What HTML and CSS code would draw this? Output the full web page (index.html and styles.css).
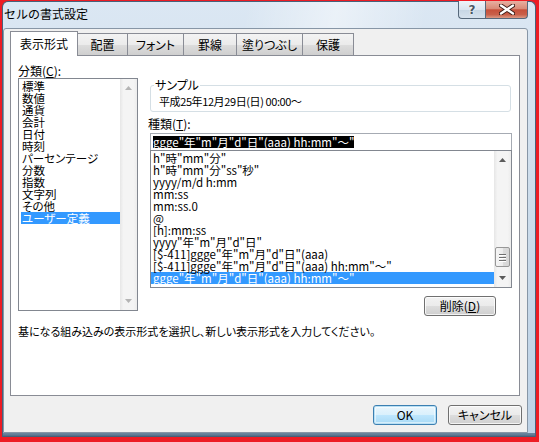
FILE: index.html
```html
<!DOCTYPE html>
<html lang="ja">
<head>
<meta charset="utf-8">
<title>セルの書式設定</title>
<link rel="stylesheet" href="styles.css">
</head>
<body>
<div class="frame">
  <div class="titlebar">
    <span class="title">セルの書式設定</span>
    <div class="caption-btns">
      <span class="cb help">?</span>
      <span class="cb close">
        <svg width="16" height="11" viewBox="0 0 16 11"><path d="M2 1.5 L14 9.5 M14 1.5 L2 9.5" stroke="#3a1a14" stroke-width="4.2" stroke-linecap="round"/><path d="M2 1.5 L14 9.5 M14 1.5 L2 9.5" stroke="#fff" stroke-width="2.4" stroke-linecap="round"/></svg>
      </span>
    </div>
  </div>
  <div class="client">
    <div class="tabs">
      <div class="tab active">表示形式</div>
      <div class="tab">配置</div>
      <div class="tab">フォント</div>
      <div class="tab">罫線</div>
      <div class="tab">塗りつぶし</div>
      <div class="tab">保護</div>
    </div>
    <div class="panel">
      <div class="cols">
        <div class="left">
          <div class="lbl">分類(<u>C</u>):</div>
          <div class="listbox cat">
            <ul class="items">
              <li>標準</li>
              <li>数値</li>
              <li>通貨</li>
              <li>会計</li>
              <li>日付</li>
              <li>時刻</li>
              <li>パーセンテージ</li>
              <li>分数</li>
              <li>指数</li>
              <li>文字列</li>
              <li>その他</li>
              <li class="sel">ユーザー定義</li>
            </ul>
            <div class="vscroll off">
              <svg class="arr" width="7" height="4" viewBox="0 0 7 4"><path d="M0 4 L3.5 0 L7 4Z" fill="#b4b4b4"/></svg>
              <svg class="arr" width="7" height="4" viewBox="0 0 7 4"><path d="M0 0 L3.5 4 L7 0Z" fill="#b4b4b4"/></svg>
            </div>
          </div>
        </div>
        <div class="right">
          <fieldset class="sample">
            <legend>サンプル</legend>
            <div class="sample-val">平成25年12月29日(日) 00:00～</div>
          </fieldset>
          <div class="lbl lbl-type">種類(<u>T</u>):</div>
          <div class="input"><span class="hl">ggge"年"m"月"d"日"(aaa) hh:mm"～"</span></div>
          <div class="listbox fmt">
            <ul class="items">
              <li>h"時"mm"分"</li>
              <li>h"時"mm"分"ss"秒"</li>
              <li>yyyy/m/d h:mm</li>
              <li>mm:ss</li>
              <li>mm:ss.0</li>
              <li>@</li>
              <li>[h]:mm:ss</li>
              <li>yyyy"年"m"月"d"日"</li>
              <li>[$-411]ggge"年"m"月"d"日"(aaa)</li>
              <li>[$-411]ggge"年"m"月"d"日"(aaa) hh:mm"～"</li>
              <li class="sel">ggge"年"m"月"d"日"(aaa) hh:mm"～"</li>
            </ul>
            <div class="vscroll">
              <svg class="arr" width="7" height="4" viewBox="0 0 7 4"><path d="M0 4 L3.5 0 L7 4Z" fill="#5b5b5b"/></svg>
              <div class="track">
                <div class="thumb"><i></i><i></i><i></i></div>
              </div>
              <svg class="arr" width="7" height="4" viewBox="0 0 7 4"><path d="M0 0 L3.5 4 L7 0Z" fill="#5b5b5b"/></svg>
            </div>
          </div>
          <div class="btnrow"><button class="btn del">削除(<u>D</u>)</button></div>
        </div>
      </div>
      <p class="desc">基になる組み込みの表示形式を選択し、新しい表示形式を入力してください。</p>
    </div>
    <div class="footer">
      <button class="btn ok">OK</button>
      <button class="btn cancel">キャンセル</button>
    </div>
  </div>
</div>
</body>
</html>
```

FILE: styles.css
```css
* { box-sizing: border-box; }

html, body {
  margin: 0;
  padding: 0;
}

body {
  width: 539px;
  height: 442px;
  overflow: hidden;
  background: #ed1c24;
  font-family: "Noto Sans CJK JP", "Noto Sans", sans-serif;
  font-size: 12px;
  color: #000;
}

.frame {
  margin: 1px 0 0 2px;
  width: 534px;
  height: 436px;
  border: 1px solid #48617a;
  border-bottom: none;
  border-radius: 6px 6px 0 0;
  background:
    linear-gradient(0deg, #3f576f 0, #5f7a94 2px, #6d879f 4px, rgba(0,0,0,0) 4px),
    linear-gradient(100deg, rgba(255,255,255,0) 40%, rgba(255,255,255,0.45) 55%, rgba(255,255,255,0) 70%),
    linear-gradient(180deg, #dbe7f3 0%, #cfdeec 40%, #bdd2e6 100%);
  display: flex;
  flex-direction: column;
}

.titlebar {
  height: 26px;
  display: flex;
  justify-content: space-between;
  align-items: flex-start;
}

.title {
  margin: 4px 0 0 1px;
  line-height: 16px;
  font-size: 12px;
  color: #000;
}

.caption-btns {
  display: flex;
  margin: -1px 7px 0 0;
}

.cb {
  height: 18px;
  display: flex;
  align-items: center;
  justify-content: center;
  border: 1px solid #56687b;
  border-top: none;
}

.help {
  width: 27px;
  border-right: none;
  border-radius: 0 0 0 4px;
  background: linear-gradient(180deg, #eef3f8 0%, #dbe5ef 50%, #c6d5e4 51%, #d6e2ee 100%);
  font-family: "DejaVu Sans", sans-serif;
  font-weight: bold;
  font-size: 12px;
  color: #4a5663;
  text-shadow: 0 0 2px #fff, 0 0 1px #fff;
}

.close {
  width: 43px;
  border-radius: 0 0 4px 0;
  background: linear-gradient(180deg, #e7b0a2 0%, #d98b78 45%, #c7503b 52%, #c9604a 80%, #dc9a86 100%);
}

.client {
  width: 525px;
  height: 405px;
  border: 1px solid #8796a6;
  border-radius: 3px 3px 0 0;
  background: #f0f0f0;
  padding: 2px 5px 0 6px;
  display: flex;
  flex-direction: column;
  font-feature-settings: "palt" 1;
}

/* Tabs */
.tabs {
  height: 24px;
  display: flex;
  align-items: flex-end;
  position: relative;
  z-index: 1;
}

.tab {
  height: 22px;
  border: 1px solid #898c95;
  border-bottom: none;
  margin-right: -1px;
  background: linear-gradient(180deg, #f3f3f3 0%, #ebebeb 50%, #dddddd 51%, #cfcfcf 100%);
  display: flex;
  align-items: center;
  justify-content: center;
  line-height: 14px;
  padding-top: 1px;
}

.tab.active {
  height: 25px;
  margin-bottom: -1px;
  background: #fff;
  padding-bottom: 2px;
}

.tab:nth-child(1) { width: 68px; }
.tab:nth-child(2) { width: 51px; }
.tab:nth-child(3) { width: 57px; }
.tab:nth-child(4) { width: 54px; }
.tab:nth-child(5) { width: 67px; }
.tab:nth-child(6) { width: 52px; }

.panel {
  width: 510px;
  height: 341px;
  border: 1px solid #898c95;
  background: #fff;
  padding: 7px 0 0 7px;
}

.cols {
  display: grid;
  grid-template-columns: 120px 362px;
  column-gap: 12px;
}

.lbl {
  line-height: 15px;
  height: 15px;
}

.lbl u, .btn u { text-decoration: underline; text-underline-offset: 1px; }

/* Listboxes */
.listbox {
  border: 1px solid #828790;
  background: #fff;
  display: flex;
}

.listbox .items {
  list-style: none;
  margin: 0;
  flex: 1;
  min-width: 0;
}

.listbox li {
  height: 12px;
  line-height: 12px;
  font-size: 11.5px;
  white-space: nowrap;
}

.listbox li.sel {
  background: #3399ff;
  color: #fff;
}

.cat {
  height: 233px;
}

.cat .items {
  padding: 1px 0 0 2px;
}

.cat li { padding-left: 1px; }

.fmt {
  height: 138px;
  margin-top: -1px;
}

.fmt .items {
  padding: 1px 0 0 0;
}

.fmt li { padding-left: 2px; }

.vscroll {
  width: 17px;
  flex: none;
  background: linear-gradient(90deg, #e6e6e6 0%, #f4f4f4 20%, #f4f4f4 80%, #ececec 100%);
  display: flex;
  flex-direction: column;
  align-items: center;
  justify-content: space-between;
  padding: 7px 0 7px;
}

.vscroll .track {
  flex: 1;
  width: 100%;
  display: flex;
  flex-direction: column;
  justify-content: flex-end;
  padding: 0 0 9px 0;
}

.thumb {
  height: 20px;
  margin: 0 1px;
  border: 1px solid #979797;
  border-radius: 2px;
  background: linear-gradient(90deg, #f5f5f5 0%, #ececec 50%, #dcdcdc 51%, #d6d6d6 100%);
  display: flex;
  flex-direction: column;
  align-items: center;
  justify-content: center;
  gap: 2px;
}

.thumb i {
  display: block;
  width: 7px;
  height: 1px;
  background: #6f6f6f;
  box-shadow: 0 1px 0 #fff;
}

/* Right column */
.sample {
  margin: 16px 0 0 0;
  padding: 0;
  border: 1px solid #d5dfe5;
  border-radius: 3px;
  min-inline-size: 0;
  width: 361px;
}

.sample legend {
  margin-left: 3px;
  padding: 0 1px;
  line-height: 12px;
  font-size: 12px;
}

.sample-val {
  height: 20px;
  line-height: 16px;
  padding: 2px 0 0 8px;
  font-size: 11px;
  letter-spacing: -0.4px;
}

.lbl-type {
  margin: 4px 0 2px -2px;
}

.input {
  height: 18px;
  border: 1px solid #a6abb3;
  background: #fff;
  padding: 2px 0 0 2px;
}

.input .hl {
  display: inline-block;
  background: #000;
  color: #fff;
  font-size: 11.5px;
  line-height: 12px;
  height: 12px;
  vertical-align: top;
}

.btnrow {
  display: flex;
  justify-content: flex-end;
  padding-right: 16px;
  margin-top: 8px;
}

.btn {
  font-family: inherit;
  font-feature-settings: "palt" 1;
  font-size: 12px;
  color: #000;
  height: 20px;
  padding: 0;
  line-height: 16px;
  border: 1px solid #707070;
  border-radius: 3px;
  background: linear-gradient(180deg, #f2f2f2 0%, #ebebeb 50%, #dddddd 51%, #cfcfcf 100%);
  box-shadow: inset 0 0 0 1px rgba(255,255,255,0.75);
}

.del { width: 72px; }

.desc {
  margin: 8px 0 0 0;
  line-height: 15px;
  font-size: 11px;
}

.footer {
  margin-top: 9px;
  display: flex;
  justify-content: flex-end;
  gap: 11px;
}

.ok {
  width: 64px;
  border-color: #3c7fb1;
  background: linear-gradient(180deg, #eaf6fd 0%, #d9f0fc 50%, #bee6fd 51%, #a7d9f5 100%);
  box-shadow: inset 0 0 0 1px #b8e0f5, inset 0 0 0 2px rgba(255,255,255,0.5);
}

.cancel { width: 74px; }
```
